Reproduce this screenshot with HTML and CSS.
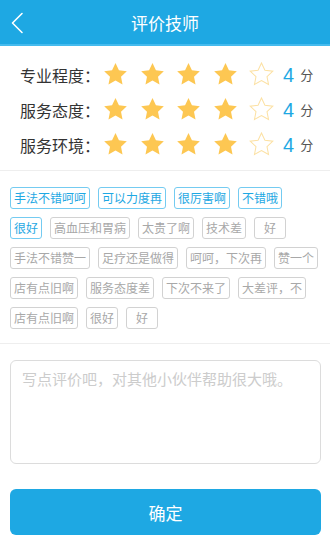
FILE: index.html
```html
<!DOCTYPE html>
<html lang="zh">
<head>
<meta charset="utf-8">
<title>评价技师</title>
<link rel="stylesheet" href="styles.css">
</head>
<body>
<header class="topbar">
  <svg class="back" width="14" height="22" viewBox="0 0 14 22"><path d="M12 1.5 L2.5 11 L12 20.5" fill="none" stroke="#fff" stroke-width="1.6" stroke-linecap="round" stroke-linejoin="round"/></svg>
  <h1 class="title">评价技师</h1>
</header>

<section class="ratings">
  <div class="rate-row">
    <span class="rate-label">专业程度：</span>
    <div class="stars">
      <svg class="star" viewBox="0 0 24 24"><path class="on" d="M12 1.8l3.05 6.4 7 .85-5.15 4.85 1.35 6.95L12 17.4l-6.25 3.45 1.35-6.95L1.95 9.05l7-.85z"/></svg>
      <svg class="star" viewBox="0 0 24 24"><path class="on" d="M12 1.8l3.05 6.4 7 .85-5.15 4.85 1.35 6.95L12 17.4l-6.25 3.45 1.35-6.95L1.95 9.05l7-.85z"/></svg>
      <svg class="star" viewBox="0 0 24 24"><path class="on" d="M12 1.8l3.05 6.4 7 .85-5.15 4.85 1.35 6.95L12 17.4l-6.25 3.45 1.35-6.95L1.95 9.05l7-.85z"/></svg>
      <svg class="star" viewBox="0 0 24 24"><path class="on" d="M12 1.8l3.05 6.4 7 .85-5.15 4.85 1.35 6.95L12 17.4l-6.25 3.45 1.35-6.95L1.95 9.05l7-.85z"/></svg>
      <svg class="star" viewBox="0 0 24 24"><path class="off" d="M12 1.8l3.05 6.4 7 .85-5.15 4.85 1.35 6.95L12 17.4l-6.25 3.45 1.35-6.95L1.95 9.05l7-.85z"/></svg>
    </div>
    <span class="score">4</span><span class="unit">分</span>
  </div>
  <div class="rate-row">
    <span class="rate-label">服务态度：</span>
    <div class="stars">
      <svg class="star" viewBox="0 0 24 24"><path class="on" d="M12 1.8l3.05 6.4 7 .85-5.15 4.85 1.35 6.95L12 17.4l-6.25 3.45 1.35-6.95L1.95 9.05l7-.85z"/></svg>
      <svg class="star" viewBox="0 0 24 24"><path class="on" d="M12 1.8l3.05 6.4 7 .85-5.15 4.85 1.35 6.95L12 17.4l-6.25 3.45 1.35-6.95L1.95 9.050l7-.85z"/></svg>
      <svg class="star" viewBox="0 0 24 24"><path class="on" d="M12 1.8l3.05 6.4 7 .85-5.15 4.85 1.35 6.95L12 17.4l-6.25 3.45 1.35-6.95L1.95 9.05l7-.85z"/></svg>
      <svg class="star" viewBox="0 0 24 24"><path class="on" d="M12 1.8l3.05 6.4 7 .85-5.15 4.85 1.35 6.95L12 17.4l-6.25 3.45 1.35-6.95L1.95 9.05l7-.85z"/></svg>
      <svg class="star" viewBox="0 0 24 24"><path class="off" d="M12 1.8l3.05 6.4 7 .85-5.15 4.85 1.35 6.95L12 17.4l-6.25 3.45 1.35-6.95L1.95 9.05l7-.85z"/></svg>
    </div>
    <span class="score">4</span><span class="unit">分</span>
  </div>
  <div class="rate-row">
    <span class="rate-label">服务环境：</span>
    <div class="stars">
      <svg class="star" viewBox="0 0 24 24"><path class="on" d="M12 1.8l3.05 6.4 7 .85-5.15 4.85 1.35 6.95L12 17.4l-6.25 3.45 1.35-6.95L1.95 9.05l7-.85z"/></svg>
      <svg class="star" viewBox="0 0 24 24"><path class="on" d="M12 1.8l3.05 6.4 7 .85-5.15 4.85 1.35 6.95L12 17.4l-6.25 3.45 1.35-6.95L1.95 9.05l7-.85z"/></svg>
      <svg class="star" viewBox="0 0 24 24"><path class="on" d="M12 1.8l3.05 6.4 7 .85-5.15 4.85 1.35 6.95L12 17.4l-6.25 3.45 1.35-6.95L1.95 9.05l7-.85z"/></svg>
      <svg class="star" viewBox="0 0 24 24"><path class="on" d="M12 1.8l3.05 6.4 7 .85-5.15 4.85 1.35 6.95L12 17.4l-6.25 3.45 1.35-6.95L1.95 9.05l7-.85z"/></svg>
      <svg class="star" viewBox="0 0 24 24"><path class="off" d="M12 1.8l3.05 6.4 7 .85-5.15 4.85 1.35 6.95L12 17.4l-6.25 3.45 1.35-6.95L1.95 9.05l7-.85z"/></svg>
    </div>
    <span class="score">4</span><span class="unit">分</span>
  </div>
</section>

<section class="tags">
  <div class="tag-row">
    <span class="tag active">手法不错呵呵</span>
    <span class="tag active">可以力度再</span>
    <span class="tag active">很厉害啊</span>
    <span class="tag active">不错哦</span>
  </div>
  <div class="tag-row">
    <span class="tag active">很好</span>
    <span class="tag">高血压和胃病</span>
    <span class="tag">太贵了啊</span>
    <span class="tag">技术差</span>
    <span class="tag">好</span>
  </div>
  <div class="tag-row">
    <span class="tag">手法不错赞一</span>
    <span class="tag">足疗还是做得</span>
    <span class="tag">呵呵，下次再</span>
    <span class="tag">赞一个</span>
  </div>
  <div class="tag-row">
    <span class="tag">店有点旧啊</span>
    <span class="tag">服务态度差</span>
    <span class="tag">下次不来了</span>
    <span class="tag">大差评，不</span>
  </div>
  <div class="tag-row">
    <span class="tag">店有点旧啊</span>
    <span class="tag">很好</span>
    <span class="tag">好</span>
  </div>
</section>

<section class="comment">
  <textarea class="comment-box" placeholder="写点评价吧，对其他小伙伴帮助很大哦。"></textarea>
  <button class="submit" type="button">确定</button>
</section>
</body>
</html>
```

FILE: styles.css
```css
* { box-sizing: border-box; }
html, body {
  margin: 0;
  padding: 0;
  background: #fff;
  font-family: "Noto Sans CJK SC", "Noto Sans", sans-serif;
}
.topbar {
  height: 46px;
  background: #1ea8e3;
  border-bottom: 2px solid #45bbee;
  display: flex;
  align-items: center;
  justify-content: center;
  position: relative;
}
.back {
  position: absolute;
  left: 10px;
  top: 12px;
}
.title {
  margin: 0;
  color: #fff;
  font-size: 17px;
  font-weight: normal;
  line-height: 1;
}
.ratings {
  padding: 11px 0 8px 20px;
  border-bottom: 1px solid #eeeeee;
}
.rate-row {
  height: 35px;
  display: flex;
  align-items: center;
}
.rate-label {
  width: 82px;
  font-size: 16px;
  color: #333;
  line-height: 1;
}
.stars {
  display: flex;
  gap: 9.5px;
}
.star {
  width: 27px;
  height: 27px;
  display: block;
}
.star .on { fill: #fdc752; }
.star .off { fill: none; stroke: #fce1a3; stroke-width: 0.9; }
.score {
  margin-left: 8px;
  font-family: "Liberation Sans", Arial, sans-serif;
  font-size: 20px;
  color: #1ea8e3;
  line-height: 1;
}
.unit {
  margin-left: 6px;
  font-size: 13px;
  color: #555;
  line-height: 1;
}
.tags {
  padding: 16px 10px 14px;
  display: flex;
  flex-direction: column;
  gap: 8px;
  border-bottom: 1px solid #eeeeee;
}
.tag-row {
  display: flex;
  gap: 8px;
}
.tag {
  height: 22px;
  min-width: 32px;
  padding: 0 3px;
  border: 1px solid #d2d2d2;
  border-radius: 3px;
  font-size: 12px;
  line-height: 20px;
  color: #a8a8a8;
  text-align: center;
  white-space: nowrap;
}
.tag.active {
  border-color: #74cbf1;
  color: #1ea8e3;
}
.comment {
  padding: 16px 9px 0 10px;
  display: flex;
  flex-direction: column;
}
.comment-box {
  height: 104px;
  width: 100%;
  resize: none;
  border: 1px solid #dcdcdc;
  border-radius: 6px;
  padding: 8px 11px;
  font-family: "Noto Sans CJK SC", sans-serif;
  font-size: 15px;
  line-height: 20px;
  color: #333;
  outline: none;
}
.comment-box::placeholder { color: #cccccc; }
.submit {
  margin-top: 25px;
  height: 46px;
  width: 100%;
  border: none;
  border-radius: 6px;
  background: #1ea8e3;
  color: #fff;
  font-family: "Noto Sans CJK SC", sans-serif;
  font-size: 17px;
}
```
